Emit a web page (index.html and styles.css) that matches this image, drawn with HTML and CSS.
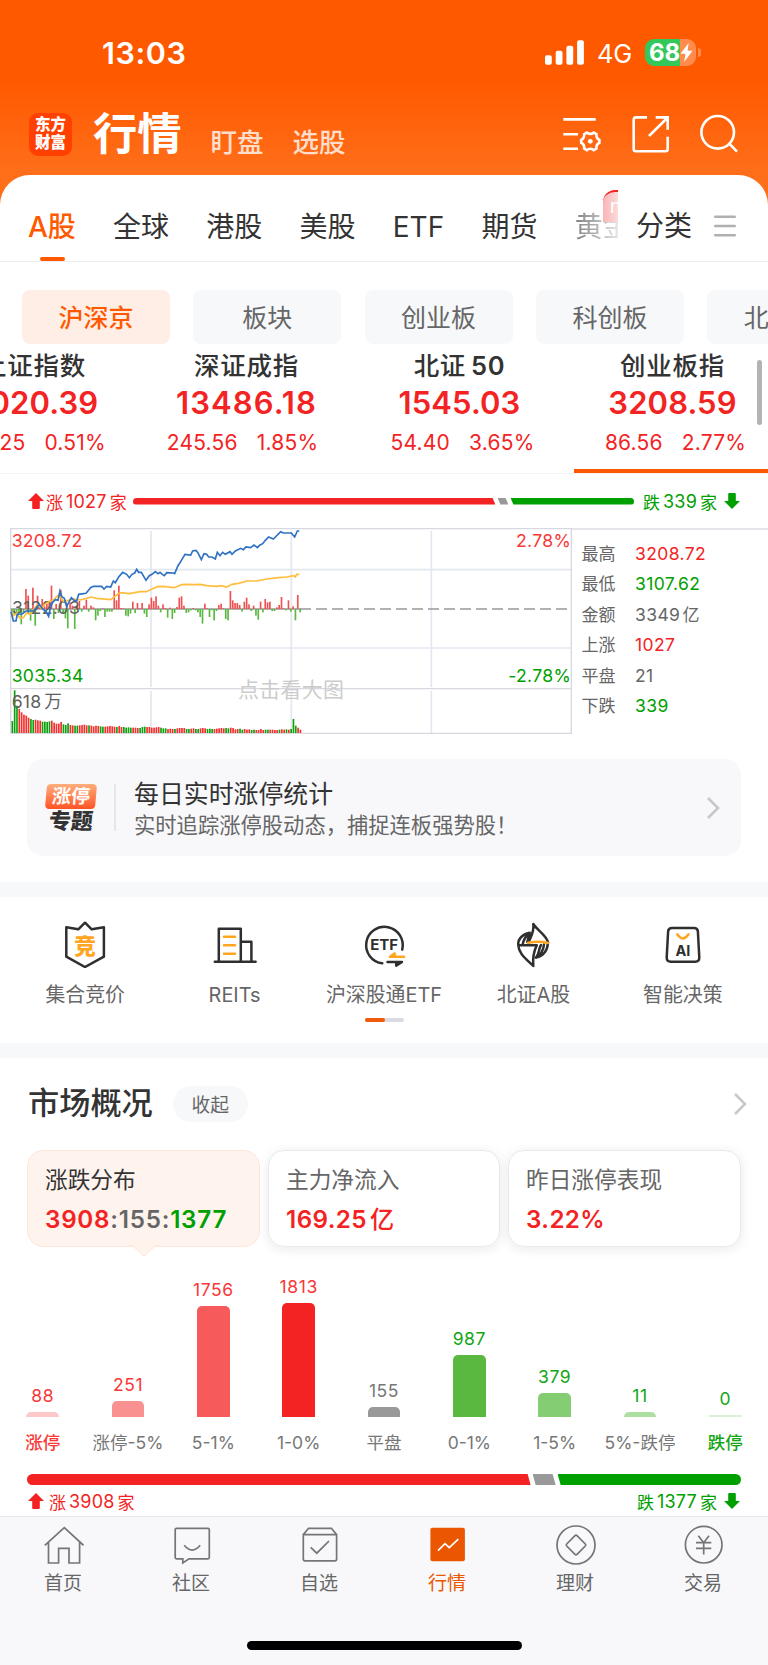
FILE: index.html
```html
<!DOCTYPE html>
<html lang="zh-CN">
<head>
    <meta charset="UTF-8">
    <meta name="viewport" content="width=device-width, initial-scale=1.0">
    <title>行情</title>
    <link rel="stylesheet" href="styles.css">
</head>
<body>
    <header class="top">
        <div class="status-bar">
            <span class="clock">13:03</span>
            <div class="status-right">
                <svg class="signal" viewBox="0 0 39 25" width="39" height="25" fill="#fff">
                    <rect x="0" y="15.3" width="6.8" height="9.5" rx="2"/>
                    <rect x="10.7" y="10.8" width="6.8" height="14" rx="2"/>
                    <rect x="21.4" y="5.8" width="6.8" height="19" rx="2"/>
                    <rect x="32.1" y="0.3" width="6.8" height="24.5" rx="2"/>
                </svg>
                <span class="network">4G</span>
                <div class="battery">
                    <span>68</span>
                    <svg viewBox="0 0 12 18" width="13" height="19"><path d="M8 0 0.3 10.2H5L3.8 18 11.7 7.4H7Z" fill="#fff"/></svg>
                </div>
                <i class="battery-cap"></i>
            </div>
        </div>
        <div class="title-bar">
            <div class="logo">东方<br>财富</div>
            <div class="titles">
                <h1>行情</h1>
                <a>盯盘</a>
                <a>选股</a>
            </div>
            <div class="top-icons">
                <svg viewBox="0 0 40 40">
                    <path d="M1.3 5.4H33.7M1.3 20.3H16M1.3 34.7H16"/>
                    <path d="M24.8 18.6Q28.3 21.3 31.8 18.6L34.4 20.1Q34 24.3 37.4 26V28.8Q34 30.4 34.4 34.6L31.8 36.1Q28.3 33.4 24.8 36.1L22.2 34.6Q22.6 30.4 19.2 28.8V26Q22.6 24.3 22.2 20.1Z"/>
                    <circle cx="28.3" cy="27.3" r="2.4" fill="#fff" stroke="none"/>
                </svg>
                <svg viewBox="0 0 40 40">
                    <path d="M16 3.4H5Q2.7 3.4 2.7 5.7V35Q2.7 37.2 5 37.2H34.4Q36.7 37.2 36.7 35V22.7"/>
                    <path d="M24.7 3.4H36.7V15.7M36.2 4 18 22"/>
                </svg>
                <svg viewBox="0 0 40 40">
                    <circle cx="18.7" cy="18.3" r="16.3"/>
                    <path d="M29.6 28.8 38 37.7"/>
                </svg>
            </div>
        </div>
    </header>

    <main>
        <nav class="tabs">
            <div class="tab-list">
                <a class="active">A股</a>
                <a>全球</a>
                <a>港股</a>
                <a>美股</a>
                <a class="latin">ETF</a>
                <a>期货</a>
                <a class="fading">黄金<em>new</em></a>
            </div>
            <a class="all">分类</a>
            <svg class="menu" viewBox="0 0 22 24" width="22" height="24"><path d="M1.2 2.7H20.8M1.2 12H20.8M1.2 21.2H20.8"/></svg>
        </nav>

        <div class="pills">
            <a class="active">沪深京</a>
            <a>板块</a>
            <a>创业板</a>
            <a>科创板</a>
            <a>北交所</a>
        </div>

        <section class="indexes">
            <div class="index">
                <h2>上证指数</h2>
                <strong>4020.39</strong>
                <p><span>20.25</span><span>0.51%</span></p>
            </div>
            <div class="index wide">
                <h2>深证成指</h2>
                <strong>13486.18</strong>
                <p><span>245.56</span><span>1.85%</span></p>
            </div>
            <div class="index">
                <h2>北证<b>50</b></h2>
                <strong>1545.03</strong>
                <p><span>54.40</span><span>3.65%</span></p>
            </div>
            <div class="index active">
                <h2>创业板指</h2>
                <strong>3208.59</strong>
                <p><span>86.56</span><span>2.77%</span></p>
            </div>
            <i class="scroll-thumb"></i>
        </section>

        <div class="breadth">
            <span class="up"><svg class="arrow" viewBox="0 0 16 16"><path d="M8 0 16 8H11.8V15Q11.8 16 10.8 16H5.2Q4.2 16 4.2 15V8H0Z"/></svg>涨<b>1027</b>家</span>
            <div class="ratio">
                <i class="ratio-up"></i>
                <i class="ratio-flat"></i>
                <i class="ratio-down"></i>
            </div>
            <span class="down">跌<b>339</b>家<svg class="arrow" viewBox="0 0 16 16"><path d="M8 16 0 8H4.2V1Q4.2 0 5.2 0H10.8Q11.8 0 11.8 1V8H16Z"/></svg></span>
        </div>

        <section class="quote">
            <!-- drawn at three units per pixel -->
            <svg class="chart" viewBox="30 39 1686 618" width="562" height="206">
                <g class="grid">
                    <path d="M32 164H1714M32 399H1714"/>
                    <path d="M453 48V516M874 48V516M1294 48V516M453 528V655M874 528V655M1294 528V655"/>
                </g>
                <path class="frame" d="M32 41H1714V655H32ZM32 521H1714"/>
                <path class="zero" d="M32 282H904"/>
                <path class="zero dashed" d="M900 282H1706"/>
                <text class="watermark" x="714" y="546">点击看大图</text>
                <g id="flow"></g>
                <g id="volume"></g>
                <text class="gray" x="36" y="297">3122.03</text>
                <path class="average" d="M33 290 40 302 50 294 60 310 70 308 80 294 90 298 100 284 112 270 125 280 135 268 150 258 162 254 175 240 190 258 205 256 222 252 240 255 260 250 274 246 290 250 332 254 350 240 360 233 388 236 420 230 440 230 456 222 472 215 490 214 522 218 545 209 560 208 580 209 600 208 620 212 650 214 664 212 680 216 696 208 716 205 740 198 770 198 800 192 835 188 860 186 880 182 886 186 890 178 898 178"/>
                <path class="price" d="M33 290 40 318 48 318 52 298 66 297 78 288 100 288 118 268 128 282 138 290 146 304 152 275 158 262 166 254 174 256 180 228 186 246 193 250 200 274 214 248 222 256 230 258 236 238 258 235 272 218 280 214 305 214 312 222 320 214 332 216 340 198 346 203 356 186 368 172 380 178 388 188 396 178 404 174 410 163 416 172 424 172 438 196 448 182 456 178 466 170 474 176 480 172 487 178 493 182 500 173 520 174 524 176 534 152 542 140 555 118 572 120 578 108 588 106 594 114 604 134 612 116 620 118 626 126 636 126 646 132 652 112 660 122 668 112 676 118 690 110 696 118 706 108 722 100 730 104 738 96 752 98 762 90 772 98 780 90 788 86 796 76 806 66 820 72 842 50 850 54 874 54 884 66 892 48 898 48"/>
                <text class="red" x="35" y="95">3208.72</text>
                <text class="green" x="35" y="501">3035.34</text>
                <text class="gray" x="35" y="578">618<tspan dx="8">万</tspan></text>
                <text class="red" x="1713" y="95" text-anchor="end">2.78%</text>
                <text class="green" x="1713" y="501" text-anchor="end">-2.78%</text>
            </svg>
            <dl class="stats">
                <dt>最高</dt><dd class="up">3208.72</dd>
                <dt>最低</dt><dd class="down">3107.62</dd>
                <dt>金额</dt><dd>3349<b>亿</b></dd>
                <dt>上涨</dt><dd class="up">1027</dd>
                <dt>平盘</dt><dd>21</dd>
                <dt>下跌</dt><dd class="down">339</dd>
            </dl>
        </section>

        <a class="promo">
            <div class="promo-logo">
                <span class="promo-badge">涨停</span>
                <span class="promo-word">专题</span>
            </div>
            <div class="promo-text">
                <h3>每日实时涨停统计</h3>
                <p>实时追踪涨停股动态，捕捉连板强势股！</p>
            </div>
            <svg class="chevron" viewBox="0 0 14 24" width="14" height="24"><path d="M2 2 12 12 2 22"/></svg>
        </a>

        <section class="shortcuts">
            <div class="shortcut-row">
                <a>
                    <svg viewBox="0 0 48 48">
                        <path d="M5.3 7.3 17.3 9.3 24 2.7 30.7 9.3 42.9 7.3V36.7L24 47 5.3 36.7Z"/>
                        <text x="24" y="34" font-size="22" fill="#ffa51f">竞</text>
                    </svg>
                    集合竞价
                </a>
                <a>
                    <svg viewBox="0 0 48 48">
                        <path d="M7.8 41.7V8.7H29.8V41.7M29.8 21.8H40.4V41.7M3.8 41.7H44.6"/>
                        <path class="accent" d="M13 16.8H24M13 25.3H24M13 33.8H24"/>
                    </svg>
                    REITs
                </a>
                <a>
                    <svg viewBox="0 0 48 48">
                        <path d="M22.3 43.3A18.3 18.3 0 1 1 42.2 29.6"/>
                        <text class="latin" x="24.2" y="30.2" font-size="15">ETF</text>
                        <path class="accent" d="M44 36.8H30L34.6 33.4V36"/>
                        <path d="M27.5 41.9H42L36.2 45.6V42.5"/>
                    </svg>
                    沪深股通ETF
                </a>
                <a>
                    <svg viewBox="0 0 48 48">
                        <path d="M24.3 4C28 10 37 15 39 22M24.3 4C25.5 12 21.5 17 19.5 22.5M20.7 12.8C13 14 8.6 19.5 9.3 25.3H27.8C24 33 23.6 39 24.3 46 18.5 40 9.5 34 9.3 25.3M20.7 12.8C15 17.5 14.2 21 13.5 25M20.7 12.8 18.3 22M39 22.5C38.5 30.5 34 36 27 37.6 30.5 34 29.5 29 32 25M27 37.6C33 34 34.5 30 35 24.5"/>
                        <path class="accent" d="M19 22.8C27 21.3 32 21.2 39 23"/>
                    </svg>
                    北证A股
                </a>
                <a>
                    <svg viewBox="0 0 48 48">
                        <path d="M13 8H35Q38.6 8 38.9 11.5L40.3 37.5Q40.4 41.7 36.3 41.7H11.7Q7.6 41.7 7.7 37.5L9.1 11.5Q9.4 8 13 8Z"/>
                        <path class="accent" d="M18.3 14.2Q24 22.5 29.5 14.2"/>
                        <text class="latin" x="24" y="35.8" font-size="14.5">AI</text>
                    </svg>
                    智能决策
                </a>
            </div>
            <div class="pager"><i></i></div>
        </section>

        <section class="market">
            <div class="market-head">
                <h2>市场概况</h2>
                <button>收起</button>
                <svg class="chevron" viewBox="0 0 14 24" width="14" height="24"><path d="M2 2 12 12 2 22"/></svg>
            </div>
            <div class="cards">
                <div class="card active">
                    <h3>涨跌分布</h3>
                    <p><span class="up">3908</span><span class="flat">:155:</span><span class="down">1377</span></p>
                    <svg class="pointer" viewBox="0 0 28 12" width="28" height="12"><path d="M0 0H28C25 0.8 24 2 16 10Q14 12 12 10C4 2 3 .8 0 0" fill="#fff3ee"/><path d="M0 .5C3 1 4 2 12 9.8Q14 11.4 16 9.8C24 2 25 1 28 .5" fill="none" stroke="#ffe6da"/></svg>
                </div>
                <div class="card">
                    <h3>主力净流入</h3>
                    <p class="up">169.25<b>亿</b></p>
                </div>
                <div class="card">
                    <h3>昨日涨停表现</h3>
                    <p class="up">3.22%</p>
                </div>
            </div>
            <div class="columns">
                <div class="column c1"><b>88</b><i style="height: 5.5px"></i><span>涨停</span></div>
                <div class="column c2"><b>251</b><i style="height: 16px"></i><span>涨停-5%</span></div>
                <div class="column c3"><b>1756</b><i style="height: 111px"></i><span>5-1%</span></div>
                <div class="column c4"><b>1813</b><i style="height: 114.5px"></i><span>1-0%</span></div>
                <div class="column c5"><b>155</b><i style="height: 10px"></i><span>平盘</span></div>
                <div class="column c6"><b>987</b><i style="height: 62.5px"></i><span>0-1%</span></div>
                <div class="column c7"><b>379</b><i style="height: 24px"></i><span>1-5%</span></div>
                <div class="column c8"><b>11</b><i style="height: 5.5px"></i><span>5%-跌停</span></div>
                <div class="column c9"><b>0</b><i style="height: 2px"></i><span>跌停</span></div>
            </div>
            <div class="ratio thick">
                <i class="ratio-up"></i>
                <i class="ratio-flat"></i>
                <i class="ratio-down"></i>
            </div>
            <div class="breadth total">
                <span class="up"><svg class="arrow" viewBox="0 0 16 16"><path d="M8 0 16 8H11.8V15Q11.8 16 10.8 16H5.2Q4.2 16 4.2 15V8H0Z"/></svg>涨<b>3908</b>家</span>
                <span class="down">跌<b>1377</b>家<svg class="arrow" viewBox="0 0 16 16"><path d="M8 16 0 8H4.2V1Q4.2 0 5.2 0H10.8Q11.8 0 11.8 1V8H16Z"/></svg></span>
            </div>
        </section>
    </main>

    <footer>
        <nav class="bottom-nav">
            <a>
                <svg viewBox="0 0 40 40"><path d="M.8 20.3 20.3 2.6 39.5 20.3M4.5 17.5V38H14.6V23.3H25V38H35.6V17.5"/></svg>
                <span>首页</span>
            </a>
            <a>
                <svg viewBox="0 0 40 40"><path d="M4.5 3.3H36Q37.3 3.3 37.3 4.6V32.6Q37.3 33.9 36 33.9H17L10.8 38V33.9H4.5Q3.2 33.9 3.2 32.6V4.6Q3.2 3.3 4.5 3.3ZM12.2 20.3Q20.2 29.8 28.2 20.3"/></svg>
                <span>社区</span>
            </a>
            <a>
                <svg viewBox="0 0 40 40"><path d="M3.3 9.6V34Q3.3 35.8 5 35.8H35Q36.6 35.8 36.6 34V9.6ZM3.3 9.6 8.5 3.3H31.4L36.6 9.6M10.7 22.3 16.8 28.2 29 16"/></svg>
                <span>自选</span>
            </a>
            <a class="active">
                <svg viewBox="0 0 40 40"><rect x="2.4" y="2.7" width="34.5" height="33.6" rx="2" fill="#eb5600" stroke="none"/><path d="M10 25.7 17 18.6 21.3 22.6 30.3 14.2" stroke="#fff"/></svg>
                <span>行情</span>
            </a>
            <a>
                <svg viewBox="0 0 40 40"><circle cx="20" cy="20" r="19"/><path d="M19 10.6 Q20 9.6 21 10.6L29.3 19Q30.3 20 29.3 21L21 29.4Q20 30.4 19 29.4L10.7 21Q9.7 20 10.7 19Z"/></svg>
                <span>理财</span>
            </a>
            <a>
                <svg viewBox="0 0 40 40"><circle cx="19.7" cy="19.7" r="18.3"/><path d="M14.3 10.8 19.7 17.7 25 10.8M12 17.7H27.3M12 23.3H27.3M19.7 17.7V29.4"/></svg>
                <span>交易</span>
            </a>
        </nav>
        <div class="home-indicator"></div>
    </footer>
    <script src="chart.js"></script>
</body>
</html>
```
FILE: styles.css
```css
:root {
    --orange: #ff5900;
    --red: #f42323;
    --green: #00a000;
    --text: #333;
    --muted: #666;
    --panel: #f7f8fa;
}

* {
    box-sizing: border-box;
}

body {
    margin: 0;
    width: 768px;
    height: 1665px;
    overflow: hidden;
    display: flex;
    flex-direction: column;
    font-family: Inter, "Noto Sans CJK SC", sans-serif;
    color: var(--text);
    background: #fff;
}

h1, h2, h3, p, dl, dd {
    margin: 0;
}

svg {
    flex: none;
    display: block;
}

.up {
    color: var(--red);
}

.down {
    color: var(--green);
}

.flat {
    color: var(--muted);
}

/* header */

.top {
    flex: none;
    height: 210px;
    background: linear-gradient(#ff5900 0, #ff5900 80px, #ff6f1a 175px);
    color: #fff;
}

.status-bar {
    height: 105px;
    display: flex;
    align-items: center;
    justify-content: space-between;
    padding: 0 67px 0 102px;
}

.clock {
    font-size: 30.5px;
    font-weight: 600;
    letter-spacing: 0.6px;
}

.status-right {
    display: flex;
    align-items: center;
}

.network {
    font-size: 25.5px;
    margin: 1px 12px 0 13px;
    width: 36px;
    letter-spacing: -0.3px;
}

.battery {
    width: 51px;
    height: 27px;
    border-radius: 9px;
    padding-left: 4px;
    display: flex;
    align-items: center;
    background: linear-gradient(90deg, #34c759 35px, #ff8c4d 35px);
    font-size: 24px;
    font-weight: 700;
    letter-spacing: -0.2px;
}

.battery-cap {
    width: 3px;
    height: 9px;
    margin-left: 2px;
    border-radius: 0 3px 3px 0;
    background: #ff8c4d;
}

.title-bar {
    height: 58px;
    display: flex;
    align-items: center;
    padding: 0 29px;
}

.logo {
    width: 43px;
    height: 43px;
    border-radius: 9px;
    background: #ff4000;
    padding-top: 3px;
    font-size: 15.5px;
    font-weight: 900;
    line-height: 18px;
    text-align: center;
}

.titles {
    display: flex;
    align-items: flex-end;
    margin-left: 21px;
}

.titles h1 {
    font-size: 44.3px;
    font-weight: 700;
    line-height: 58px;
}

.titles a {
    font-size: 26.5px;
    font-weight: 500;
    line-height: 41px;
    margin-left: 29px;
    color: #ffdecc;
}

.top-icons {
    display: flex;
    gap: 28.5px;
    margin-left: auto;
}

.top-icons svg {
    width: 40px;
    height: 40px;
    fill: none;
    stroke: #fff;
    stroke-width: 2.6;
}

/* sheet */

main {
    flex: none;
    height: 1341px;
    margin-top: -35px;
    background: #fff;
    border-radius: 30px 30px 0 0;
    overflow: hidden;
}

.tabs {
    height: 87px;
    border-bottom: 1px solid #ececec;
    display: flex;
    align-items: center;
    padding: 15px 32px 0 28px;
    font-size: 28px;
    line-height: 74px;
}

.tab-list {
    flex: none;
    width: 590px;
    height: 71px;
    display: flex;
    gap: 37.2px;
    overflow: hidden;
    white-space: nowrap;
}

.tab-list a {
    position: relative;
}

.tab-list .active {
    color: var(--orange);
    font-weight: 500;
}

.tab-list .active::after {
    content: "";
    position: absolute;
    left: 12px;
    bottom: 0;
    width: 25px;
    height: 4px;
    border-radius: 2px;
    background: var(--orange);
}

.tab-list .latin {
    letter-spacing: 0.1px;
}

.tab-list .fading {
    color: transparent;
    background: linear-gradient(90deg, #808080, #e8e8e8 44px);
    background-clip: text;
}

.fading em {
    position: absolute;
    left: 28px;
    top: 0;
    width: 50px;
    height: 32px;
    padding-left: 7px;
    border-radius: 12px 12px 12px 0;
    border-top: 2px solid var(--red);
    background: linear-gradient(90deg, #f9b5b5, #fde6e6 20px);
    color: #fff;
    font-size: 20px;
    font-style: normal;
    line-height: 28px;
}

.all {
    flex: none;
    margin-left: 18px;
}

.menu {
    margin-left: auto;
    stroke: #b0b0b0;
    stroke-width: 2.4;
    stroke-linecap: round;
}

.pills {
    display: flex;
    gap: 23.3px;
    padding: 28px 0 0 22px;
    overflow: hidden;
}

.pills a {
    flex: none;
    width: 148px;
    height: 54px;
    border-radius: 8px;
    background: var(--panel);
    color: var(--muted);
    font-size: 25px;
    line-height: 57px;
    text-align: center;
}

.pills .active {
    background: #ffeee6;
    color: var(--orange);
    font-weight: 500;
}

.indexes {
    position: relative;
    height: 130px;
    border-bottom: 1px solid #f3f3f3;
    display: flex;
    margin-left: -73px;
    text-align: center;
}

.index {
    position: relative;
    flex: none;
    width: 213px;
    color: var(--red);
}

.index h2 {
    height: 43px;
    color: var(--text);
    font-size: 25.5px;
    font-weight: 500;
    letter-spacing: 0.7px;
    line-height: 43px;
}

.index h2 b {
    font-weight: 600;
    margin-left: 5px;
}

.index strong {
    display: block;
    font-size: 31px;
    font-weight: 600;
    line-height: 32px;
    letter-spacing: 0.1px;
}

.index p {
    display: flex;
    justify-content: center;
    gap: 19px;
    padding-left: 6px;
    font-size: 21px;
    line-height: 48px;
    letter-spacing: 0.2px;
}

.index.wide strong {
    letter-spacing: 1.1px;
}

.index.wide p {
    padding: 0 8px 0 0;
}

.index.active::after {
    content: "";
    position: absolute;
    left: 8px;
    bottom: 0;
    width: 205px;
    height: 4px;
    background: var(--orange);
}

.scroll-thumb {
    position: absolute;
    left: 830px;
    top: 16px;
    width: 5px;
    height: 65px;
    border-radius: 3px;
    background: #b3b3b3;
}

.breadth {
    height: 54px;
    display: flex;
    align-items: center;
    padding: 0 28px;
    font-size: 17px;
}

.breadth > span {
    display: flex;
    align-items: center;
}

.breadth b {
    font-size: 18px;
    font-weight: 400;
    margin: 0 3px;
    letter-spacing: 0.2px;
}

.arrow {
    width: 16px;
    height: 16px;
    fill: currentColor;
}

.up .arrow {
    margin-right: 2px;
}

.down .arrow {
    margin-left: 7px;
}

.ratio {
    flex: 1;
    display: flex;
    gap: 1px;
    height: 7px;
    margin: 0 9px 0 6px;
}

.ratio i {
    clip-path: polygon(0 0, calc(100% - 3px) 0, 100% 100%, 3px 100%);
}

.ratio .ratio-up {
    flex: 1027;
    background: var(--red);
    border-radius: 4px 0 0 4px;
    clip-path: polygon(0 0, calc(100% - 3px) 0, 100% 100%, 0 100%);
}

.ratio .ratio-flat {
    flex: 0 0 11px;
    margin-left: 1px;
    background: #999;
}

.ratio .ratio-down {
    flex: 350;
    margin-left: 1px;
    background: var(--green);
    border-radius: 0 4px 4px 0;
    clip-path: polygon(0 0, 100% 0, 100% 100%, 3px 100%);
}

.quote {
    height: 231px;
    display: flex;
    padding-left: 10px;
}

.chart {
    font-size: 53px;
    fill: none;
}

.chart text {
    letter-spacing: 0.8px;
}

.chart .red {
    fill: #f93838;
}

.chart .green {
    fill: var(--green);
}

.chart .gray {
    fill: #606060;
}

.chart .watermark {
    fill: #ccc;
    font-size: 63px;
}

.grid {
    stroke: #e3e7ef;
    stroke-width: 5;
}

.frame {
    stroke: #d8d9e0;
    stroke-width: 4;
}

.zero {
    stroke: #999;
    stroke-width: 4;
}

.dashed {
    stroke-dasharray: 33 15;
}

.price {
    stroke: #2f72c4;
    stroke-width: 5;
}

.average {
    stroke: #ffbe3d;
    stroke-width: 5;
}

.stats {
    flex: 1;
    height: 206px;
    border-top: 2px solid #e4e5ea;
    padding: 9px 0 0 9.5px;
    display: grid;
    grid-template-columns: 53.5px auto;
    grid-auto-rows: 30.4px;
    font-size: 17.5px;
    line-height: 30.4px;
    color: var(--muted);
}

.stats dt {
    font-size: 17px;
}

.stats dd {
    letter-spacing: 0.4px;
}

.stats b {
    font-weight: 400;
    font-size: 17px;
    margin-left: 2px;
}

.promo {
    height: 97px;
    margin: 0 27px 26px;
    padding: 0 21px 0 19px;
    display: flex;
    align-items: center;
    border-radius: 16px;
    background: #f8f8fb;
}

.promo-logo {
    width: 70px;
    height: 47px;
    border-right: 2px solid #e6e6e8;
    display: flex;
    flex-direction: column;
}

.promo-badge,
.promo-word {
    width: 50px;
    text-align: center;
    transform: skewX(-5deg);
}

.promo-badge {
    height: 25px;
    border-radius: 4px;
    background: linear-gradient(#ffae7c, #ff5426);
    color: #fff;
    font-size: 19px;
    font-weight: 700;
    line-height: 26px;
}

.promo-word {
    font-size: 22px;
    font-weight: 900;
    line-height: 24px;
}

.promo-text {
    flex: 1;
    padding-left: 18px;
    white-space: nowrap;
}

.promo h3 {
    font-size: 24.9px;
    font-weight: 400;
    line-height: 34px;
}

.promo p {
    font-size: 21.3px;
    line-height: 28px;
    color: var(--muted);
}

.chevron {
    fill: none;
    stroke: #c8c8c8;
    stroke-width: 2.6;
}

/* shortcuts */

.shortcuts {
    height: 176px;
    border: solid var(--panel);
    border-width: 15px 0;
    padding: 23px 10.5px 0;
}

.shortcut-row {
    display: grid;
    grid-template-columns: repeat(5, 1fr);
}

.shortcut-row a {
    display: flex;
    flex-direction: column;
    align-items: center;
    font-size: 19.9px;
    line-height: 28px;
    color: var(--muted);
    gap: 13px;
}

.shortcut-row svg {
    width: 48px;
    height: 48px;
    fill: none;
    stroke: #2f2f2f;
    stroke-width: 2.5;
    stroke-linecap: round;
    stroke-linejoin: round;
}

.shortcut-row .accent {
    stroke: #ffa51f;
}

.shortcut-row text {
    fill: #2f2f2f;
    stroke: none;
    font-weight: 900;
    text-anchor: middle;
}

.shortcut-row text.latin {
    font-weight: 700;
}

.shortcut-row text[fill] {
    fill: #ffa51f;
}

.pager {
    width: 39px;
    height: 4px;
    margin: 9px auto 0;
    border-radius: 2px;
    background: #d9dae2;
}

.pager i {
    display: block;
    width: 20px;
    height: 4px;
    border-radius: 2px;
    background: #f05a0a;
}

/* market overview */

.market-head {
    height: 92px;
    padding: 0 21px 0 28px;
    display: flex;
    align-items: center;
}

.market-head h2 {
    font-size: 31.2px;
    font-weight: 500;
    line-height: 40px;
    padding-bottom: 3px;
}

.market-head button {
    width: 75px;
    height: 36px;
    margin-left: 20px;
    padding: 0 0 2px;
    border: 0;
    border-radius: 18px;
    background: var(--panel);
    color: var(--muted);
    font: inherit;
    font-size: 18.8px;
}

.market-head .chevron {
    margin-left: auto;
}

.cards {
    display: grid;
    grid-template-columns: 233px 232px 233px;
    gap: 8px;
    padding-left: 27px;
}

.card {
    position: relative;
    height: 97px;
    padding: 12px 17px;
    border: 1px solid #e9e9e9;
    border-radius: 16px;
    box-shadow: 0 2px 12px rgba(0, 0, 0, 0.09);
}

.card.active {
    border-color: #ffe6da;
    background: #fff3ee;
    box-shadow: none;
}

.card h3 {
    font-size: 22.7px;
    font-weight: 400;
    line-height: 34px;
    color: var(--muted);
}

.card.active h3 {
    color: var(--text);
}

.card p {
    font-size: 24.2px;
    font-weight: 600;
    line-height: 45px;
    letter-spacing: 0.4px;
}

.card.active p {
    letter-spacing: 0.75px;
}

.card b {
    font-weight: 500;
    margin-left: 3px;
}

.pointer {
    position: absolute;
    left: 102px;
    bottom: -11px;
}

.columns {
    height: 211px;
    display: grid;
    grid-template-columns: repeat(9, 1fr);
}

.column {
    display: flex;
    flex-direction: column;
    align-items: center;
    justify-content: flex-end;
    font-size: 17.5px;
    white-space: nowrap;
}

.column b {
    font-weight: 400;
    line-height: 20px;
    margin-bottom: 6px;
    color: #f93838;
    letter-spacing: 0.6px;
}

.column i {
    width: 32.5px;
    border-radius: 5px 5px 0 0;
}

.column span {
    height: 41px;
    padding-top: 12px;
    line-height: 28px;
    color: #777;
}

.c1 i { background: #fdc8c8; }
.c2 i { background: #f99191; }
.c3 i { background: #f75a5a; }
.c4 i { background: #f42323; }
.c5 i { background: #999; }
.c6 i { background: #5ab840; }
.c7 i { background: #85cd73; }
.c8 i { background: #addfa1; }
.c9 i { background: #d9f1d4; border-radius: 0; }

.c5 b { color: #777; }

.c6 b, .c7 b, .c8 b, .c9 b, .column.c9 span {
    color: #14a514;
}

.column.c1 span {
    color: #f93838;
}

.c1 span, .c9 span {
    font-weight: 500;
}

.ratio.thick {
    height: 11px;
    margin: 16px 27px 0;
}

.thick .ratio-up {
    flex: 3908;
    border-radius: 6px 0 0 6px;
}

.thick .ratio-flat {
    flex: 0 0 23px;
}

.thick .ratio-down {
    flex: 1423;
    border-radius: 0 6px 6px 0;
}

.total {
    height: 32px;
    justify-content: space-between;
}

.total .up .arrow {
    margin-right: 5px;
}

/* bottom navigation */

footer {
    flex: 1;
    border-top: 1px solid #e6e7eb;
    background: #f8f8fb;
}

.bottom-nav {
    display: grid;
    grid-template-columns: repeat(6, 1fr);
    padding-top: 8px;
}

.bottom-nav a {
    display: flex;
    flex-direction: column;
    align-items: center;
    font-size: 19px;
    line-height: 37px;
    color: var(--muted);
}

.bottom-nav span {
    margin-right: 2px;
}

.bottom-nav .active {
    color: #eb5600;
}

.bottom-nav svg {
    width: 40px;
    height: 40px;
    fill: none;
    stroke: #757575;
    stroke-width: 1.7;
}

.home-indicator {
    width: 275px;
    height: 9px;
    margin: 39px auto 0;
    border-radius: 5px;
    background: #000;
}
```
FILE: chart.js
```js
"use strict";

// one value per minute, positive bars rise above the zero line
const flow = [
    -10, -15, -20, -12, -46, -10, 60, 40, -35, 64, -50, 40, 12, 30, 8, 15, 20, 70, -30, 15,
    -12, 58, -12, -28, -58, 20, 10, -60, 12, 24, -8, 10, 28, -8, 10, 5, -34, -20, -6, 2,
    -24, -8, -8, -8, 56, 26, 70, 3, 2, -20, -22, -14, 22, -12, 18, 2, 18, -14, -24, 14,
    34, 24, 38, 10, -10, 14, 3, -26, 4, -30, -12, 6, 34, 38, 10, -12, -10, -4, 3, -4,
    -10, -24, -44, 16, 2, -24, -4, -34, -6, 12, 16, 2, -30, -34, 54, 26, 18, 18, 12, -8,
    22, 34, 14, -6, 10, -20, -32, 22, -10, 30, 20, 22, -6, -6, 5, 12, 36, 2, -4, 26,
    -8, 8, -34, 42, -10
];

const volume = [
    36, 128, 82, 72, 62, 55, 52, 46, 42, 39, 40, 38, 37, 34, 34, 33, 35, 37, 31, 28,
    28, 33, 26, 24, 29, 24, 23, 22, 22, 23, 24, 25, 23, 23, 22, 20, 22, 21, 20, 19,
    19, 20, 21, 20, 19, 18, 21, 18, 18, 16, 17, 16, 16, 16, 15, 15, 18, 19, 18, 18,
    16, 16, 17, 18, 16, 14, 14, 12, 13, 12, 12, 14, 15, 15, 15, 12, 12, 13, 14, 12,
    12, 14, 15, 14, 12, 13, 12, 12, 13, 14, 15, 14, 15, 14, 16, 15, 11, 12, 13, 10,
    12, 10, 11, 9, 10, 9, 9, 12, 9, 10, 10, 10, 10, 9, 9, 10, 11, 10, 11, 10,
    12, 42, 22, 16, 10
];

// r = rising, g = falling
const volumeColors =
    "gggrrrrrggrrrggggrrrrrgggrrggrrrrgrrrrggrrrrrgrrggggrrrgggrrrrrrgggrrrgrrrrggrrggrrrgggrrrrrggrrrrggrrrggrrrrggrrrrgrrgrgggrr";

function bar(group, x, y, height, color) {
    const rect = document.createElementNS("http://www.w3.org/2000/svg", "rect");
    rect.setAttribute("x", x - 2.5);
    rect.setAttribute("y", y);
    rect.setAttribute("width", 5);
    rect.setAttribute("height", height);
    rect.setAttribute("fill", color);
    group.appendChild(rect);
}

const flowGroup = document.getElementById("flow");
flow.forEach((v, i) => {
    const x = 36 + i * 6.97;
    bar(flowGroup, x, v > 0 ? 282 - v : 282, Math.abs(v), v > 0 ? "#f05050" : "#5ab840");
});

const volumeGroup = document.getElementById("volume");
volume.forEach((v, i) => {
    const x = 37 + i * 6.97;
    bar(volumeGroup, x, 654 - v, v, volumeColors[i] === "g" ? "#0ca00c" : "#f42f2f");
});
```
